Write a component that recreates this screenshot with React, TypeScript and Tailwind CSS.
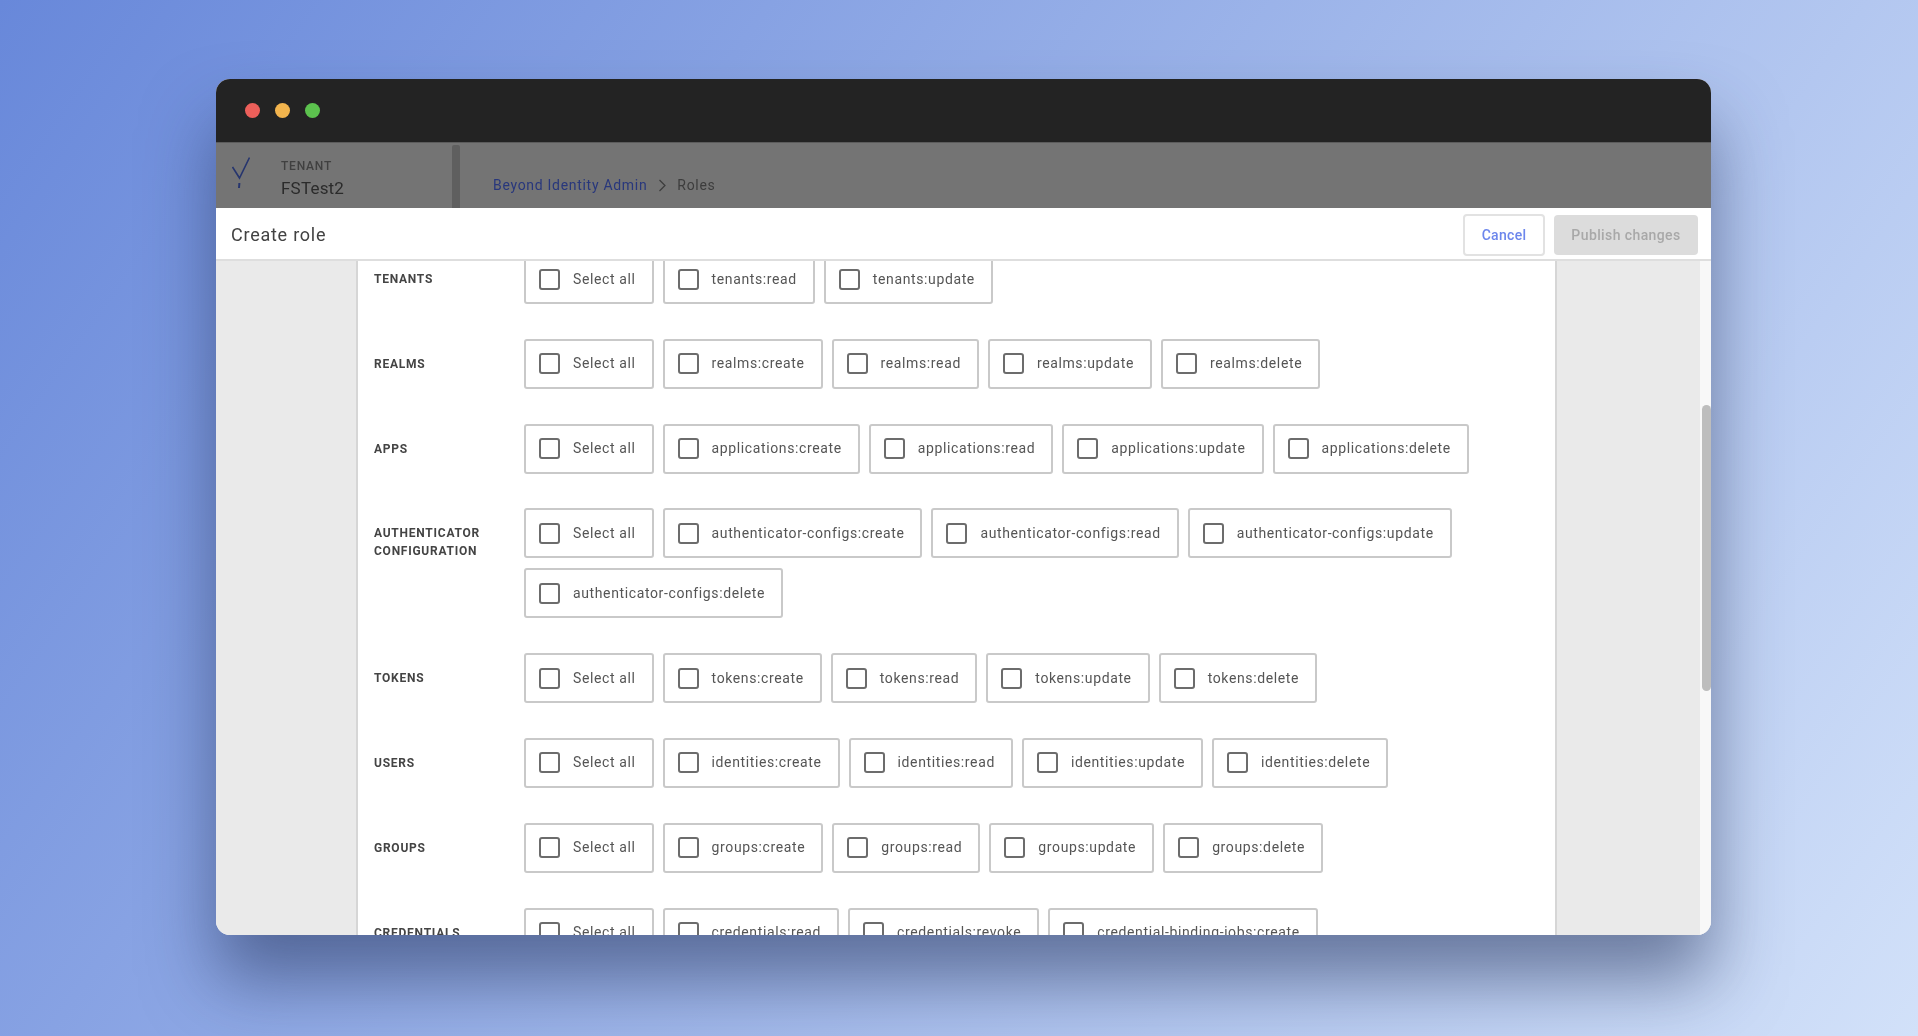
const rows = [
  { label: ['TENANTS'], items: ['tenants:read', 'tenants:update'] },
  { label: ['REALMS'], items: ['realms:create', 'realms:read', 'realms:update', 'realms:delete'] },
  { label: ['APPS'], items: ['applications:create', 'applications:read', 'applications:update', 'applications:delete'] },
  {
    label: ['AUTHENTICATOR', 'CONFIGURATION'],
    items: ['authenticator-configs:create', 'authenticator-configs:read', 'authenticator-configs:update', 'authenticator-configs:delete'],
  },
  { label: ['TOKENS'], items: ['tokens:create', 'tokens:read', 'tokens:update', 'tokens:delete'] },
  { label: ['USERS'], items: ['identities:create', 'identities:read', 'identities:update', 'identities:delete'] },
  { label: ['GROUPS'], items: ['groups:create', 'groups:read', 'groups:update', 'groups:delete'] },
  { label: ['CREDENTIALS'], items: ['credentials:read', 'credentials:revoke', 'credential-binding-jobs:create'] },
];

function Scope({ name }: { name: string }) {
  return (
    <label className="flex h-[50px] items-center rounded-[3px] border-2 border-[#c9c9c9] bg-white pl-[13px] pr-[16px]">
      <span className="h-[21px] w-[21px] shrink-0 rounded-[3px] border-2 border-[#6c6c6c]" />
      <span className="ml-[13px] whitespace-nowrap text-[14px] tracking-[0.62px] text-[#555555]">{name}</span>
    </label>
  );
}

function Row({ label, items }: { label: string[]; items: string[] }) {
  return (
    <div className="mb-[34.8px] flex">
      <div className="w-[150px] shrink-0 pt-[16px] text-[12px] font-bold leading-[18px] tracking-[0.75px] text-[#444444]">
        {label.map((l) => (
          <div key={l}>{l}</div>
        ))}
      </div>
      <div className="flex flex-wrap gap-x-[9px] gap-y-[10px]">
        <Scope name="Select all" />
        {items.map((i) => (
          <Scope key={i} name={i} />
        ))}
      </div>
    </div>
  );
}

export default function App() {
  return (
    <div className="h-[1036px] overflow-hidden bg-[linear-gradient(125deg,#6888da_0%,#d2e1f9_100%)] pl-[216px] pt-[79px] font-['Roboto',sans-serif]">
      <div className="flex h-[856px] w-[1495px] flex-col overflow-hidden rounded-[14px] bg-white shadow-[0_45px_70px_rgba(35,50,90,0.55)] blur-[0.5px]">
        <div className="flex h-[63px] shrink-0 items-center gap-[15px] bg-[#232323] pl-[29px]">
          <span className="h-[15px] w-[15px] rounded-full bg-[#ec5f5a]" />
          <span className="h-[15px] w-[15px] rounded-full bg-[#f2b44d]" />
          <span className="h-[15px] w-[15px] rounded-full bg-[#5cc24e]" />
        </div>

        <div className="flex h-[66px] shrink-0 border-t border-[#5c5c5c] bg-[#747474]">
          <div className="flex w-[244px] shrink-0 items-stretch">
            <div className="flex flex-1 pl-[16px] pt-[14px]">
              <svg width="18" height="31" viewBox="0 0 18 31" fill="none" className="shrink-0">
                <path d="M0.5 10 L7.5 21 L17.5 0.5" stroke="#26356e" strokeWidth="1.6" />
                <path d="M7.4 26 L7 31" stroke="#26356e" strokeWidth="2" />
              </svg>
              <div className="ml-[31px] pt-[2px]">
                <div className="text-[12px] font-medium leading-[14px] tracking-[0.8px] text-[#404040]">TENANT</div>
                <div className="mt-[4px] text-[17px] leading-[22px] tracking-[0.2px] text-[#2b2b2b]">FSTest2</div>
              </div>
            </div>
            <div className="mt-[2px] w-[8px] rounded-t-[2px] bg-[#5f5f5f]" />
          </div>
          <div className="ml-[33px] flex items-center pt-[19px] text-[14px] tracking-[0.7px]">
            <span className="text-[#28377c]">Beyond Identity Admin</span>
            <svg width="9" height="13" viewBox="0 0 9 13" fill="none" className="ml-[11px] mr-[10px]">
              <path d="M1.5 1 L7 6.5 L1.5 12" stroke="#3c3c3c" strokeWidth="1.2" />
            </svg>
            <span className="text-[#3d3d3d]">Roles</span>
          </div>
        </div>

        <div className="flex h-[53px] shrink-0 items-center justify-between border-b-2 border-[#dedede] bg-white pl-[15px] pr-[13px] pt-[2px]">
          <div className="text-[18px] tracking-[0.75px] text-[#424242]">Create role</div>
          <div className="flex items-center gap-[9px]">
            <button className="h-[42px] w-[82px] rounded-[4px] border-2 border-[#e2e2e2] pt-[1px] text-[14px] font-medium tracking-[0.3px] text-[#6c86ec]">
              Cancel
            </button>
            <button className="h-[40px] w-[144px] rounded-[4px] bg-[#dcdcdc] pt-[1px] text-[14px] font-medium tracking-[0.4px] text-[#a8a8a8]">
              Publish changes
            </button>
          </div>
        </div>

        <div className="flex min-h-0 flex-1 bg-[#eaeaea]">
          <div className="w-[140px] shrink-0" />
          <div className="w-[1201px] shrink-0 overflow-hidden border-x-2 border-[#d6d6d6] bg-white pl-[16px]">
            <div className="-mt-[7px]">
              {rows.map((r) => (
                <Row key={r.label[0]} label={r.label} items={r.items} />
              ))}
            </div>
          </div>
          <div className="flex-1" />
          <div className="w-[11px] shrink-0 bg-[#f8f8f8] pl-[2px] pt-[144px]">
            <div className="h-[286px] rounded-full bg-[#bdbdbd]" />
          </div>
        </div>
      </div>
    </div>
  );
}
